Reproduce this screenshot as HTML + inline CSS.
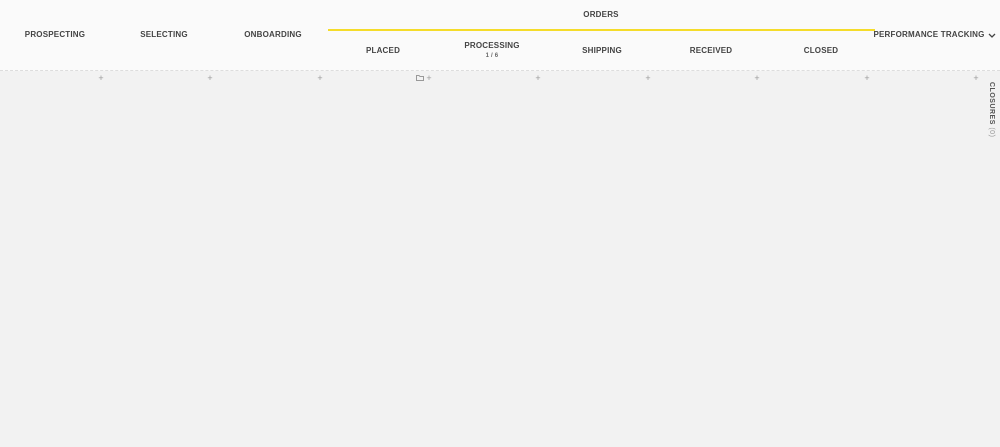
<!DOCTYPE html>
<html><head><style>
body{margin:0;width:1000px;height:447px;background:#f2f2f2;font-family:"Liberation Sans",sans-serif;overflow:hidden;position:relative}
.hdr{position:absolute;left:0;top:0;width:1000px;height:70px;background:#fafafa;border-bottom:1px dashed #ddd}
.t{position:absolute;font-size:8px;font-weight:bold;color:#444;letter-spacing:0.2px;white-space:nowrap;transform:translateX(-50%)}
.p{position:absolute;top:73px;font-size:9px;color:#999;transform:translateX(-50%)}
</style></head><body>
<div class="hdr"></div>
<div style="position:absolute;left:328px;top:29px;width:547px;height:2px;background:#f5dc2a"></div>
<div class="t" style="left:55px;top:30px">PROSPECTING</div>
<div class="t" style="left:164px;top:30px">SELECTING</div>
<div class="t" style="left:273px;top:30px">ONBOARDING</div>
<div class="t" style="left:601px;top:10px">ORDERS</div>
<div class="t" style="left:383px;top:46px">PLACED</div>
<div class="t" style="left:492px;top:41px">PROCESSING</div>
<div class="t" style="left:492px;top:53px;font-size:6px;color:#666">1 / 6</div>
<div class="t" style="left:602px;top:46px">SHIPPING</div>
<div class="t" style="left:711px;top:46px">RECEIVED</div>
<div class="t" style="left:821px;top:46px">CLOSED</div>
<div class="t" style="left:929px;top:30px">PERFORMANCE TRACKING</div>
<svg style="position:absolute;left:988px;top:33px" width="8" height="6"><path d="M1 1L4 4L7 1" stroke="#444" stroke-width="1.3" fill="none"/></svg>
<div class="p" style="left:101px">+</div>
<div class="p" style="left:210px">+</div>
<div class="p" style="left:320px">+</div>
<svg style="position:absolute;left:416px;top:75px" width="8" height="6"><path d="M0.5 0.5H3L4 1.5H7.5V5.5H0.5Z" stroke="#999" fill="none"/></svg>
<div class="p" style="left:429px">+</div>
<div class="p" style="left:538px">+</div>
<div class="p" style="left:648px">+</div>
<div class="p" style="left:757px">+</div>
<div class="p" style="left:867px">+</div>
<div class="p" style="left:976px">+</div>
<div style="position:absolute;left:988px;top:82px;writing-mode:vertical-rl;font-size:7px;font-weight:bold;color:#555;letter-spacing:0.5px">CLOSURES <span style="font-weight:normal;color:#999">(0)</span></div>
</body></html>
